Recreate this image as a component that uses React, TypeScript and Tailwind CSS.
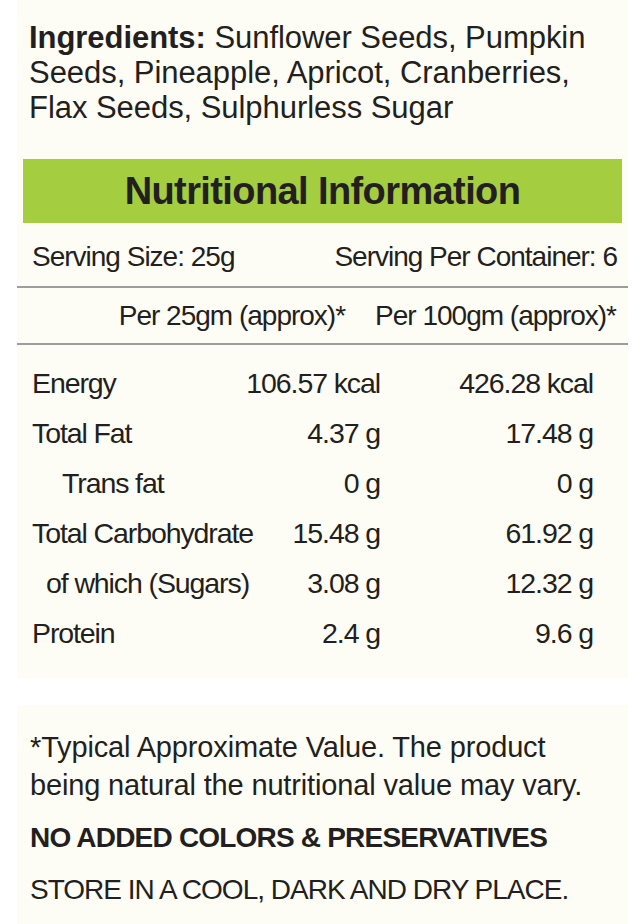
const font = { fontFamily: '"Liberation Sans", Arial, sans-serif' }

const rows = [
  { label: "Energy", indent: "pl-0", a: "106.57 kcal", b: "426.28 kcal" },
  { label: "Total Fat", indent: "pl-0", a: "4.37 g", b: "17.48 g" },
  { label: "Trans fat", indent: "pl-[30px]", a: "0 g", b: "0 g" },
  { label: "Total Carbohydrate", indent: "pl-0", a: "15.48 g", b: "61.92 g" },
  { label: "of which (Sugars)", indent: "pl-[14px]", a: "3.08 g", b: "12.32 g" },
  { label: "Protein", indent: "pl-0", a: "2.4 g", b: "9.6 g" },
]

export default function App() {
  return (
    <div className="w-[640px] h-[924px] bg-white text-[#231f20] overflow-hidden" style={font}>
      <div className="mx-[17px] w-[611px] bg-[#fdfdf5] pb-[20px]">
        <p className="px-[12px] pt-[20px] text-[31px] leading-[35px] tracking-[-0.05px]">
          <span className="font-bold">Ingredients:</span> Sunflower Seeds, Pumpkin
          <br />
          Seeds, Pineapple, Apricot, Cranberries,
          <br />
          Flax Seeds, Sulphurless Sugar
        </p>

        <div className="mt-[34px] mx-[6px] h-[64px] bg-[#a4cd3f] flex items-center justify-center">
          <h1 className="text-[38px] font-bold tracking-[-0.6px]">Nutritional Information</h1>
        </div>

        <div className="flex justify-between items-center h-[63px] pt-[5px] pl-[15px] pr-[11px] text-[28px] tracking-[-1px] whitespace-nowrap">
          <span>Serving Size: 25g</span>
          <span>Serving Per Container: 6</span>
        </div>
        <div className="h-[2px] bg-[#9d9d9d]" />

        <div className="flex justify-end items-center gap-[30px] h-[55px] pr-[12px] text-[28px] tracking-[-1px] whitespace-nowrap">
          <span>Per 25gm (approx)*</span>
          <span>Per 100gm (approx)*</span>
        </div>
        <div className="h-[2px] bg-[#9d9d9d]" />

        <div className="pt-[13px] pl-[15px] pr-[35px]">
          {rows.map((r) => (
            <div
              key={r.label}
              className="grid grid-cols-[minmax(0,1fr)_auto_213px] items-center h-[50px] text-[28.5px] tracking-[-1.1px] whitespace-nowrap"
            >
              <span className={r.indent}>{r.label}</span>
              <span className="text-right">{r.a}</span>
              <span className="text-right">{r.b}</span>
            </div>
          ))}
        </div>
      </div>

      <div className="mt-[27px] mx-[17px] w-[611px] h-[230px] bg-[#fdfdf5] px-[13px] pt-[23px]">
        <p className="text-[29px] leading-[38px] tracking-[-0.15px] whitespace-nowrap">
          *Typical Approximate Value. The product
          <br />
          being natural the nutritional value may vary.
        </p>
        <p className="mt-[15px] text-[28px] font-bold leading-[38px] tracking-[-0.8px] whitespace-nowrap">
          NO ADDED COLORS &amp; PRESERVATIVES
        </p>
        <p className="mt-[14px] text-[28px] leading-[38px] tracking-[-1px] whitespace-nowrap">
          STORE IN A COOL, DARK AND DRY PLACE.
        </p>
      </div>
    </div>
  )
}
